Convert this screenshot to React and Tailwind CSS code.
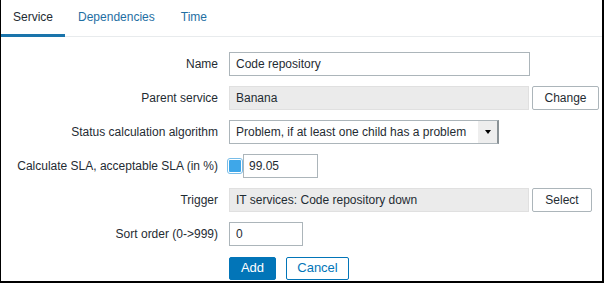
import { useState } from "react"

const tabs = ["Service", "Dependencies", "Time"]

const Row = ({ label, children }) => (
  <div className="flex h-[24px] items-center">
    <div className="w-[217px] text-right pr-0 text-[#1f2c33]">{label}</div>
    <div className="ml-[11px] flex items-center h-full">{children}</div>
  </div>
)

const App = () => {
  const [active, setActive] = useState("Service")
  const [sla, setSla] = useState(true)

  return (
    <div
      className="h-[283px] w-[604px] bg-white border-l border-r-2 border-b-2 border-black text-[12px] overflow-hidden"
      style={{ fontFamily: '"Liberation Sans", Arial, sans-serif' }}
    >
      <div className="flex border-b border-[#e8ebed]">
        {tabs.map((t) => (
          <button
            key={t}
            onClick={() => setActive(t)}
            className={
              active === t
                ? "h-[37px] -mb-px px-[12px] flex items-center border-b-[3px] border-[#1a74ab] text-[#1f2c33]"
                : "h-[37px] -mb-px px-[13px] flex items-center border-b-[3px] border-transparent text-[#1f6fa3]"
            }
          >
            {t}
          </button>
        ))}
      </div>

      <div className="pt-[15px] flex flex-col gap-[10px]">
        <Row label="Name">
          <input
            defaultValue="Code repository"
            className="w-[301px] h-[24px] border border-[#acb5ba] px-[6px] text-[#1f2c33] outline-none"
          />
        </Row>

        <Row label="Parent service">
          <div className="w-[300px] h-[24px] border border-[#e0e0e0] bg-[#ebebeb] px-[6px] flex items-center text-[#1f2c33]">
            Banana
          </div>
          <button className="ml-[3px] w-[67px] h-[24px] border border-[#acb5ba] bg-white text-[#1f2c33] rounded-[2px]">
            Change
          </button>
        </Row>

        <Row label="Status calculation algorithm">
          <div className="w-[270px] h-[24px] border border-[#acb5ba] border-r-2 border-r-[#8a9296] flex items-center">
            <span className="flex-1 px-[6px] text-[#1f2c33] whitespace-nowrap">
              Problem, if at least one child has a problem
            </span>
            <span className="w-[19px] h-full bg-[#eeeeee] flex items-center justify-center">
              <span className="w-0 h-0 border-l-[3px] border-r-[3px] border-t-[4px] border-l-transparent border-r-transparent border-t-black" />
            </span>
          </div>
        </Row>

        <Row label="Calculate SLA, acceptable SLA (in %)">
          <button
            onClick={() => setSla(!sla)}
            className="-ml-[2px] w-[16px] h-[16px] rounded-[3px] border border-[#79bde8] p-[1px] bg-white"
          >
            <span className={sla ? "block w-full h-full rounded-[1px] bg-[#3ea7e9]" : "block w-full h-full"} />
          </button>
          <input
            defaultValue="99.05"
            className="w-[75px] h-[24px] border border-[#acb5ba] px-[5px] text-[#1f2c33] outline-none"
          />
        </Row>

        <Row label="Trigger">
          <div className="w-[300px] h-[24px] border border-[#e0e0e0] bg-[#ebebeb] px-[6px] flex items-center text-[#1f2c33]">
            IT services: Code repository down
          </div>
          <button className="ml-[3px] w-[60px] h-[24px] border border-[#acb5ba] bg-white text-[#1f2c33] rounded-[2px]">
            Select
          </button>
        </Row>

        <Row label="Sort order (0-&gt;999)">
          <input
            defaultValue="0"
            className="w-[74px] h-[24px] border border-[#acb5ba] px-[6px] text-[#1f2c33] outline-none"
          />
        </Row>

        <Row label="">
          <button className="w-[47px] h-[23px] bg-[#0275b8] border border-[#0275b8] text-white text-[13px] rounded-[2px]">
            Add
          </button>
          <button className="ml-[10px] w-[63px] h-[23px] bg-white border border-[#0275b8] text-[#0275b8] text-[13px] rounded-[2px]">
            Cancel
          </button>
        </Row>
      </div>
    </div>
  )
}

export default App
